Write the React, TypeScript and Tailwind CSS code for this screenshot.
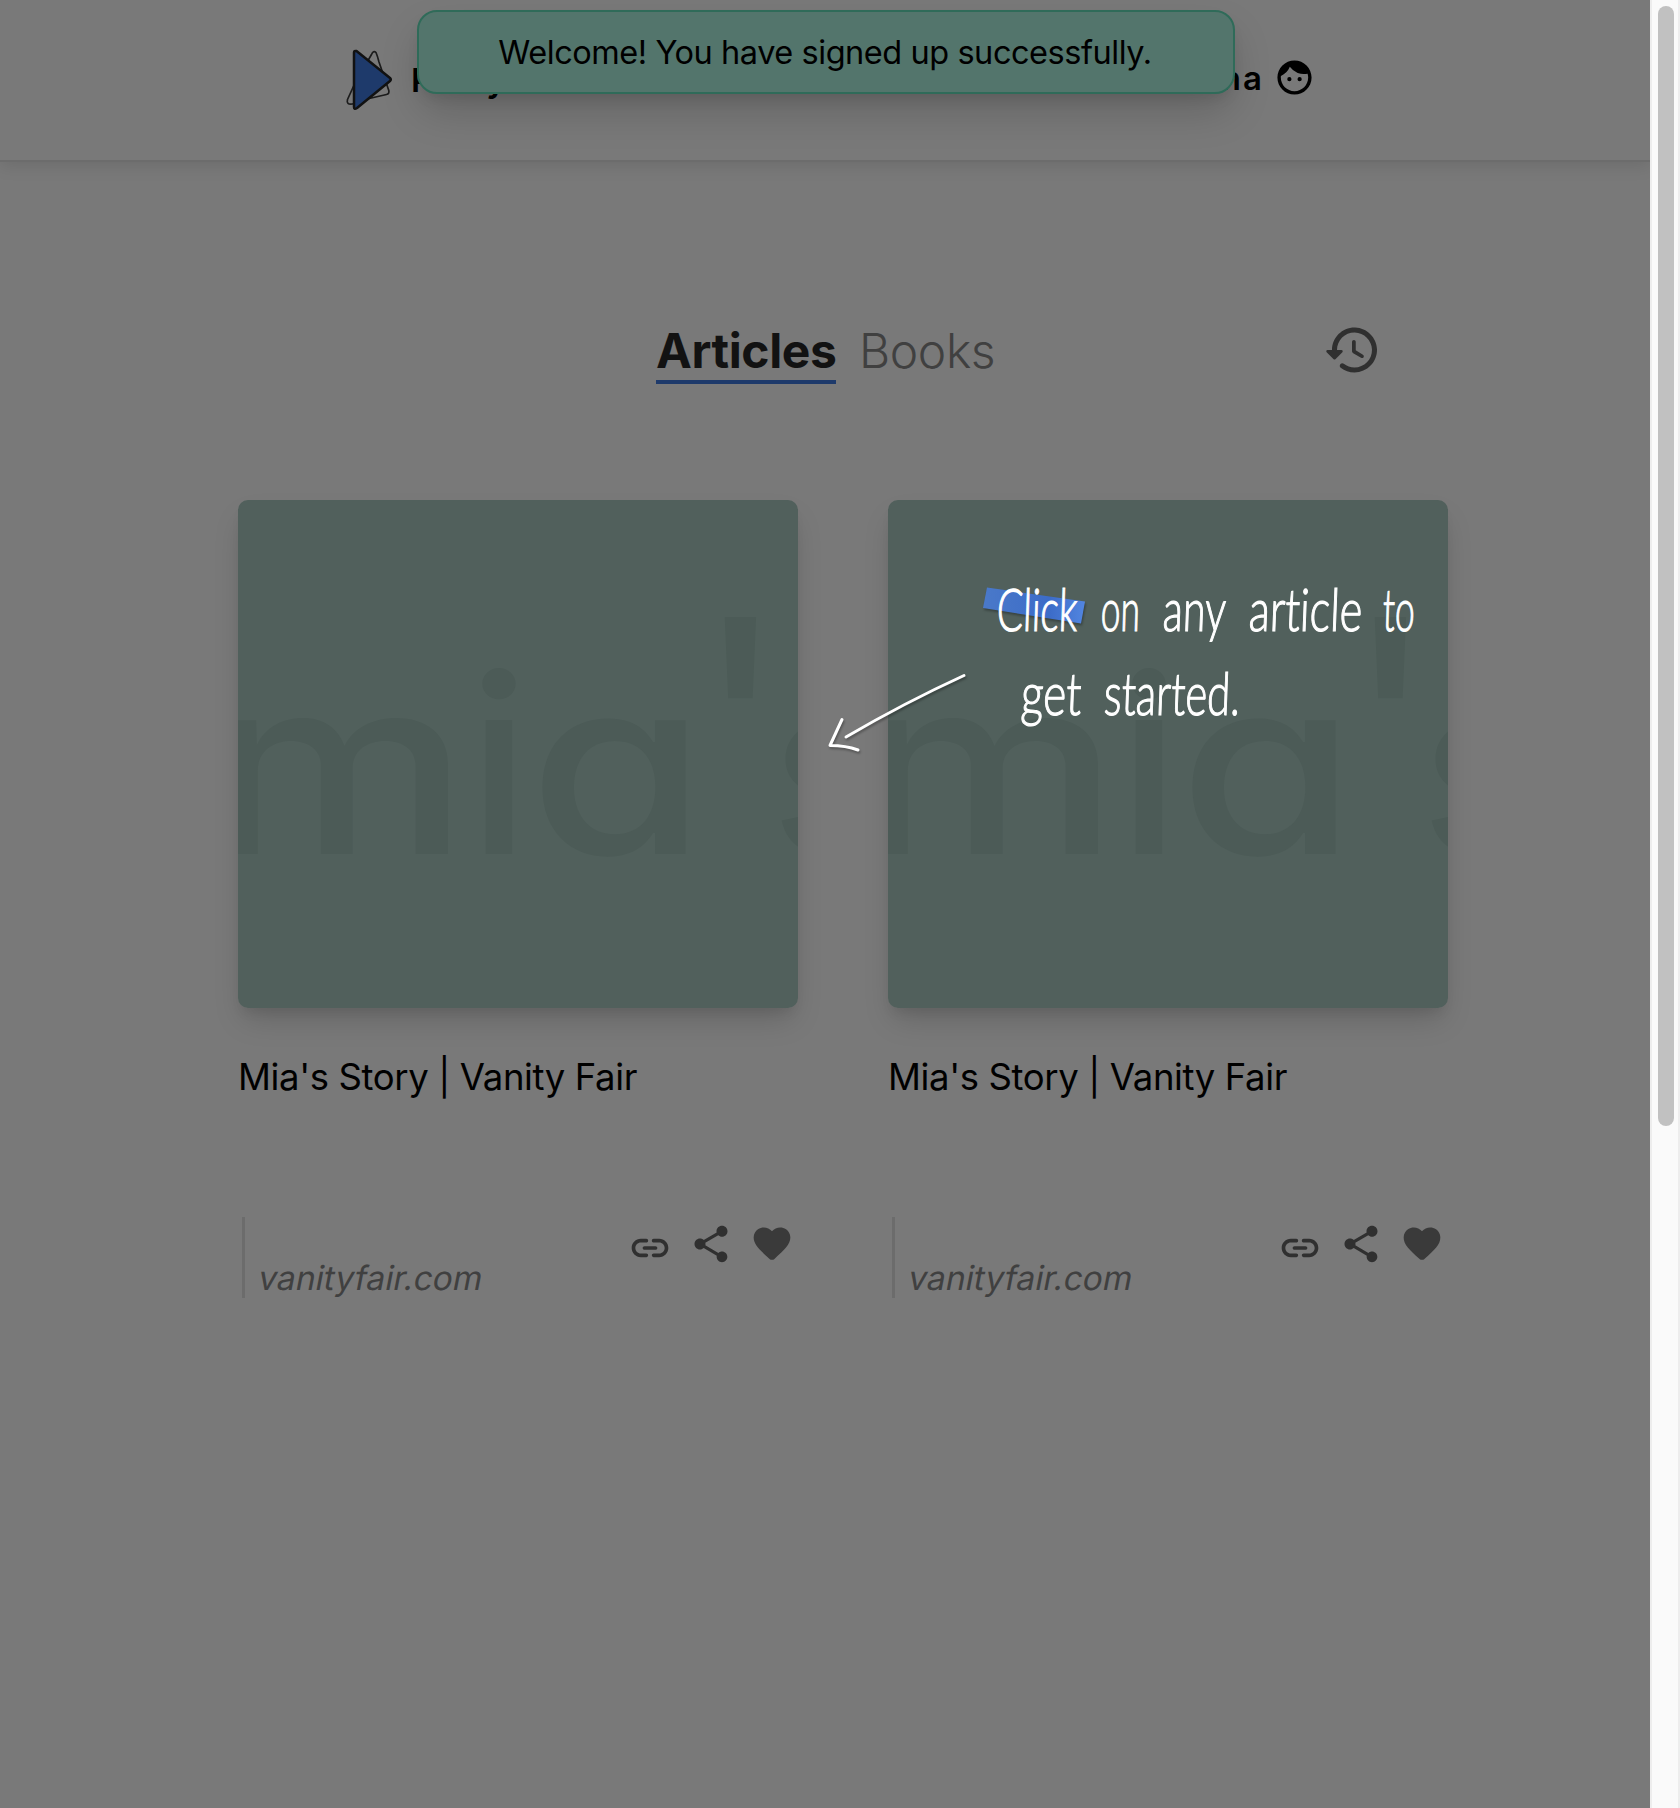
import React from "react";
import { MdFace, MdShare } from "react-icons/md";

const HISTORY =
  "M13.26 3C8.17 2.86 4 6.95 4 12H2.21c-.45 0-.67.54-.35.85l2.79 2.8c.2.2.51.2.71 0l2.79-2.8c.31-.31.09-.85-.36-.85H6c0-3.9 3.18-7.05 7.1-7 3.72.05 6.85 3.18 6.9 6.9.05 3.91-3.1 7.1-7 7.1-1.61 0-3.1-.55-4.28-1.48-.4-.31-.96-.28-1.32.08-.42.42-.39 1.13.08 1.49C9.02 20.29 10.93 21 13 21c5.05 0 9.14-4.17 9-9.26-.13-4.69-4.05-8.61-8.74-8.74zm-.51 5c-.41 0-.75.34-.75.75v3.68c0 .35.19.68.49.86l3.12 1.85c.36.21.82.09 1.03-.26.21-.36.09-.82-.26-1.03l-2.88-1.71v-3.4c0-.4-.34-.74-.75-.74z";
const LINK =
  "M17 7h-3c-.55 0-1 .45-1 1s.45 1 1 1h3c1.65 0 3 1.35 3 3s-1.35 3-3 3h-3c-.55 0-1 .45-1 1s.45 1 1 1h3c2.76 0 5-2.24 5-5s-2.24-5-5-5zm-9 5c0 .55.45 1 1 1h6c.55 0 1-.45 1-1s-.45-1-1-1H9c-.55 0-1 .45-1 1zm2 3H7c-1.65 0-3-1.35-3-3s1.35-3 3-3h3c.55 0 1-.45 1-1s-.45-1-1-1H7c-2.76 0-5 2.24-5 5s2.24 5 5 5h3c.55 0 1-.45 1-1s-.45-1-1-1z";
const HEART =
  "M13.35 20.13c-.76.69-1.93.69-2.69-.01l-.11-.1C5.3 15.27 1.87 12.16 2 8.28c.06-1.7.93-3.33 2.34-4.29 2.64-1.8 5.9-.96 7.66 1.1 1.76-2.06 5.02-2.91 7.66-1.1 1.41.96 2.28 2.59 2.34 4.29.14 3.88-3.3 6.99-8.55 11.76l-.1.09z";

function Icon({ d, className }: { d: string; className: string }) {
  return (
    <svg viewBox="0 0 24 24" fill="currentColor" className={className}>
      <path d={d} />
    </svg>
  );
}

function Logo() {
  return (
    <svg width="48" height="64" viewBox="0 0 48 64" fill="none" strokeLinejoin="round" className="shrink-0">
      <path
        d="M26.5 6.5Q28.5 2 31 4.500Q32.500 8 34 14L43.800 42.500Q44.500 46 41.500 46.500L22 51L7.500 56Q1 57 2.500 51.500L10 35Z"
        stroke="#1c1c1c"
        strokeWidth="1.7"
      />
      <path
        d="M9 4.500Q9 2.500 11.500 3L45 30Q46.500 31.500 45 33L12 60Q9 62 9 59Z"
        fill="#1e3a6b"
        stroke="#121212"
        strokeWidth="2.500"
      />
    </svg>
  );
}

function Watermark() {
  return (
    <div className="font-medium text-[245px] leading-none text-[#4c5b57] select-none [font-feature-settings:'cv11','ss03']">
      <span className="absolute -left-[34px] top-[143px] origin-left scale-x-[1.22]">m</span>
      <span className="absolute left-[230px] top-[143px]">i</span>
      <span className="absolute left-[291px] top-[143px] origin-left scale-x-[1.17]">a</span>
      <span className="absolute left-[458px] top-[79px] origin-top-left scale-[1.16]">'</span>
      <span className="absolute left-[532px] top-[143px]">s</span>
    </div>
  );
}

function Card() {
  return (
    <article className="w-[560px]">
      <div className="h-[508px] rounded-[10px] shadow-[0_16px_30px_-6px_rgba(0,0,0,0.17),0_8px_12px_-4px_rgba(0,0,0,0.08)]">
        <div className="relative h-full overflow-hidden rounded-[10px] bg-[#51605c]">
          <Watermark />
        </div>
      </div>
      <h2 className="mt-[47px] h-[44px] text-[36.5px] font-[420] leading-[44px] tracking-[-0.38px] text-black whitespace-nowrap">
        Mia's Story | Vanity Fair
      </h2>
      <div className="mt-[118px] flex justify-between">
        <div className="ml-1 flex h-[81px] items-end border-l-[3px] border-[#6c6c6c] pl-[14px]">
          <span className="inline-block -skew-x-[11deg] text-[33.5px] font-[430] leading-[40px] text-[#404040]">
            vanityfair.com
          </span>
        </div>
        <div className="mt-[5px] mr-1 flex text-[#303030]">
          <Icon d={LINK} className="mt-1 size-11" />
          <MdShare className="ml-[17px] mr-[1px] size-11" />
          <Icon d={HEART} className="ml-4 size-11 text-[#3a3a3a]" />
        </div>
      </div>
    </article>
  );
}

function Hint() {
  return (
    <div className="absolute left-[820px] top-[570px] h-[200px] w-[620px] text-white">
      <svg
        width="620"
        height="200"
        viewBox="0 0 620 200"
        fill="none"
        className="absolute inset-0 drop-shadow-[1px_2px_1px_rgba(0,0,0,0.3)]"
      >
        <defs>
          <linearGradient id="tape">
            <stop offset="0" stopColor="#4a79c9" />
            <stop offset="0.65" stopColor="#3c6cc8" />
            <stop offset="1" stopColor="#5285e0" />
          </linearGradient>
        </defs>
        <path d="M167 17.500 265 31.500 261 53.500 163 38Z" fill="url(#tape)" />
        <path
          d="M144 105.500Q84 133 26 167M22 149.500 10 175.500Q26 175.500 38 180"
          stroke="white"
          strokeWidth="3"
          strokeLinecap="round"
          strokeLinejoin="round"
        />
      </svg>
      <div className="relative font-['Lato'] font-light text-[59px] leading-[84px] whitespace-nowrap [font-variant-ligatures:none] [-webkit-text-stroke:1.2px_white]">
        <p className="h-[84px]">
          <span className="absolute left-[177px] -top-[3px] origin-left -skew-x-3 scale-x-[0.66]">Click</span>
          <span className="absolute left-[281px] -top-[3px] origin-left -skew-x-3 scale-x-[0.6]">on</span>
          <span className="absolute left-[343px] -top-[3px] origin-left -skew-x-3 scale-x-[0.7]">any</span>
          <span className="absolute left-[429px] -top-[3px] origin-left -skew-x-3 scale-x-[0.735]">article</span>
          <span className="absolute left-[563px] -top-[3px] origin-left -skew-x-3 scale-x-[0.6]">to</span>
        </p>
        <p className="h-[84px]">
          <span className="absolute left-[201px] top-[81px] origin-left -skew-x-3 scale-x-[0.75]">get</span>
          <span className="absolute left-[284px] top-[81px] origin-left -skew-x-3 scale-x-[0.71]">started.</span>
        </p>
      </div>
    </div>
  );
}

export default function App() {
  return (
    <div className="relative flex h-[1808px] w-[1680px] overflow-hidden bg-[#797979] font-['Inter',sans-serif]">
      <div className="w-[1650px] shrink-0">
        <header className="flex h-[162px] items-start justify-between border-b-2 border-[#6c6c6c] pl-[345px] pr-[336px] shadow-[0_4px_16px_rgba(0,0,0,0.1)]">
          <div className="mt-[48px] flex items-center">
            <Logo />
            <span className="ml-[18px] text-[33px] font-semibold leading-[64px] tracking-[9px] text-black">Play</span>
          </div>
          <div className="mt-[56px] -mr-[1px] flex items-center text-black">
            <span className="text-[33px] font-semibold leading-[44px] tracking-[2px]">na</span>
            <MdFace className="ml-[10px] -mt-[1px] size-[41px]" />
          </div>
        </header>

        <nav className="relative mt-[158px] flex h-[64px] pl-[656px] text-[48px]">
          <span className="mr-[23px] h-[64px] w-[180px] border-b-4 border-[#1e3a6b] font-bold leading-[62px] tracking-[-0.4px] text-[#121212]">
            Articles
          </span>
          <span className="font-[280] leading-[62px] tracking-[-0.4px] text-[#404040]">Books</span>
          <Icon d={HISTORY} className="absolute left-[1322px] top-0 size-[60px] text-[#303030]" />
        </nav>

        <main className="mt-[116px] flex gap-[90px] pl-[238px]">
          <Card />
          <Card />
        </main>
      </div>

      <div className="w-[30px] shrink-0 border-x-2 border-[#ededed] bg-[#fafafa] px-1.5 pt-1.5">
        <div className="h-[1120px] w-4 rounded-full bg-[#c1c1c1]" />
      </div>

      <Hint />

      <div className="absolute left-[417px] top-[10px] flex h-[84px] w-[818px] items-center justify-center rounded-[20px] border-2 border-[#2f6b59] bg-[#53756c] text-[32.5px] font-[420] tracking-[-0.45px] text-black shadow-[0_20px_40px_-4px_rgba(0,0,0,0.18),0_8px_16px_-6px_rgba(0,0,0,0.12)]">
        <span className="mt-[2px] mr-[2px]">Welcome! You have signed up successfully.</span>
      </div>
    </div>
  );
}
